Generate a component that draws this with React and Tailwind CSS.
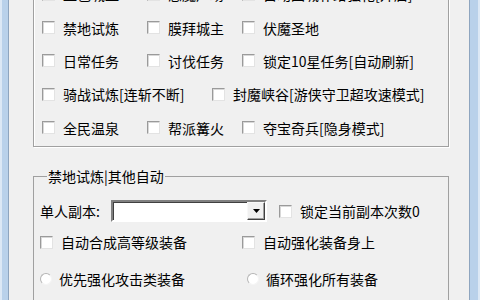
import React from 'react';

const font = { fontFamily: '"Noto Sans CJK SC", "Microsoft YaHei", sans-serif' };

const Check = () => (
  <span className="inline-block w-[13px] h-[13px] shrink-0 bg-white border border-t-[#9a9a9a] border-l-[#9a9a9a] border-b-[#e3e3e3] border-r-[#e3e3e3] shadow-[inset_1px_1px_0_#d8d8d8]" />
);

const Radio = () => (
  <span className="inline-block w-[12px] h-[12px] shrink-0 rounded-full bg-white border border-t-[#b5b5b5] border-l-[#b5b5b5] border-b-[#f4f4f4] border-r-[#f4f4f4]" />
);

const Opt = ({ label, w, radio, gap = 'gap-[8px]' }) => (
  <div className={`flex items-center ${gap} shrink-0 ${w || ''}`}>
    {radio ? <Radio /> : <Check />}
    <span className="whitespace-nowrap">{label}</span>
  </div>
);

const rows = [
  [['血色城堡', 'w-[105px]'], ['恶魔广场', 'w-[95px]'], ['自动回城补给强化[开启]', '']],
  [['禁地试炼', 'w-[105px]'], ['膜拜城主', 'w-[95px]'], ['伏魔圣地', '']],
  [['日常任务', 'w-[105px]'], ['讨伐任务', 'w-[95px]'], ['锁定10星任务[自动刷新]', '']],
  [['骑战试炼[连斩不断]', 'w-[170px]'], ['封魔峡谷[游侠守卫超攻速模式]', '']],
  [['全民温泉', 'w-[105px]'], ['帮派篝火', 'w-[95px]'], ['夺宝奇兵[隐身模式]', '']],
];

const rowH = ['h-[31px] pb-[3px]', 'h-[33px]', 'h-[33px]', 'h-[34px]', 'h-[33px]'];

export default function App() {
  return (
    <div className="w-[480px] h-[300px] overflow-hidden flex text-[14px] leading-[18px] text-black" style={font}>
      {/* left window frame */}
      <div className="flex shrink-0">
        <div className="w-[2px] bg-[#dce8f5]" />
        <div className="w-[6px] bg-[#b9d1ea]" />
        <div className="w-[1px] bg-[#8ea5bf]" />
      </div>

      <div className="flex-1 bg-[#f0f0f0] pl-[24px] pr-[20px]">
        {/* group 1, top scrolled off */}
        <div className="-mt-[22px] border border-[#a0a0a0] shadow-[inset_1px_1px_0_#fff,1px_1px_0_#fff] pl-[8px] pt-[1px] pb-[2px]">
          {rows.map((r, i) => (
            <div key={i} className={`flex items-center ${rowH[i]}`}>
              {r.map(([label, w]) => (
                <Opt key={label} label={label} w={w} />
              ))}
            </div>
          ))}
        </div>

        {/* group 2 */}
        <fieldset className="mt-[20px] border border-[#a0a0a0] pl-[6px] h-[200px]">
          <legend className="ml-[7px] px-[1px]">禁地试炼|其他自动</legend>

          <div className="flex items-center h-[22px] mt-[15px]">
            <span className="w-[71px] whitespace-nowrap">单人副本:</span>
            <div className="flex w-[156px] h-[22px] bg-white border-2 border-t-[#808080] border-l-[#808080] border-b-[#fff] border-r-[#fff]">
              <div className="flex-1 border-t border-l border-[#404040]" />
              <div className="w-[18px] flex items-center justify-center bg-[#f0f0f0] border border-t-[#f8f8f8] border-l-[#f8f8f8] border-b-[#404040] border-r-[#404040] shadow-[inset_-1px_-1px_0_#a0a0a0]">
                <svg width="7" height="4" viewBox="0 0 7 4"><path d="M0 0h7L3.5 4z" fill="#000" /></svg>
              </div>
            </div>
            <div className="ml-[12px]">
              <Opt label="锁定当前副本次数0" />
            </div>
          </div>

          <div className="flex items-center h-[20px] mt-[10px]">
            <Opt label="自动合成高等级装备" w="w-[202px]" />
            <Opt label="自动强化装备身上" />
          </div>

          <div className="flex items-center h-[20px] mt-[17px]">
            <Opt label="优先强化攻击类装备" w="w-[207px]" radio gap="gap-[7px]" />
            <Opt label="循环强化所有装备" radio gap="gap-[7px]" />
          </div>
        </fieldset>
      </div>

      {/* right window frame */}
      <div className="flex shrink-0">
        <div className="w-[1px] bg-[#8ea5bf]" />
        <div className="w-[8px] bg-[#b9d1ea]" />
        <div className="w-[2px] bg-[#dce8f5]" />
      </div>
    </div>
  );
}
